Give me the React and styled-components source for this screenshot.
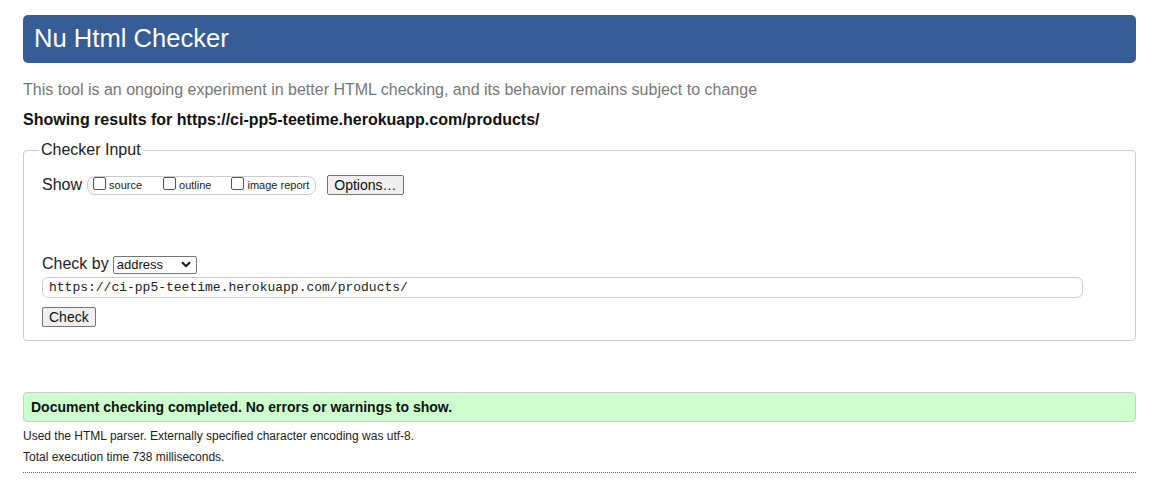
import React from 'react';
import styled, { createGlobalStyle } from 'styled-components';

const GlobalStyle = createGlobalStyle`
  html, body {
    margin: 0;
    padding: 0;
    background: #fff;
  }
  body {
    font-family: "Liberation Sans", Arial, sans-serif;
    color: #111;
  }
`

const Page = styled.div`
  padding: 15px 28px 0 23px;
`

const Header = styled.h1`
  margin: 0;
  height: 48px;
  padding-left: 11px;
  background: #365d95;
  border-radius: 5px;
  color: #fff;
  font-size: 25.6px;
  font-weight: 400;
  line-height: 47px;
`

const Intro = styled.p`
  margin: 18px 0 0;
  color: #777;
  font-size: 16px;
  line-height: 18px;
`

const Results = styled.p`
  margin: 12px 0 0;
  font-size: 16px;
  font-weight: 700;
  line-height: 18px;
  color: #111;
`

const Fieldset = styled.fieldset`
  margin: 12px 0 0;
  padding: 0 18px 13px;
  border: 1px solid #ccc;
  border-radius: 4px;
  min-width: 0;
`

const Legend = styled.legend`
  margin-left: -3px;
  padding: 0 2px;
  font-size: 16px;
  line-height: 18px;
  color: #222;
`

const Row = styled.div`
  display: flex;
  align-items: center;
  margin-top: ${p => p.$top || 0}px;
`

const Label = styled.span`
  font-size: 16px;
  line-height: 20px;
  color: #222;
  margin-right: 4px;
`

const Group = styled.div`
  display: flex;
  align-items: center;
  height: 17px;
  padding: 0 6px 0 5px;
  border: 1px solid #ccc;
  border-radius: 8px;
  margin-left: 1px;
`

const Option = styled.label`
  display: flex;
  align-items: center;
  font-size: 11px;
  color: #222;
  margin-right: ${p => p.$gap || 0}px;
`

const Box = styled.span`
  display: inline-block;
  width: 11px;
  height: 11px;
  border: 1px solid #555;
  border-radius: 2px;
  margin-right: 3px;
  margin-top: -4px;
  background: #fff;
`

const Button = styled.button`
  font-family: "Liberation Sans", Arial, sans-serif;
  font-size: 14px;
  line-height: 16px;
  color: #111;
  background: #efefef;
  border: 1px solid #767676;
  border-radius: 2px;
  padding: 1px 6px;
  margin-left: ${p => p.$left || 0}px;
  height: ${p => p.$h || 20}px;
`

const SelectWrap = styled.div`
  position: relative;
  width: 84px;
  height: 18px;
`

const Select = styled.select`
  appearance: none;
  width: 84px;
  height: 18px;
  margin: 0;
  padding: 0 0 0 3px;
  border: 1px solid #767676;
  border-radius: 2px;
  background: #fff;
  font-family: "Liberation Sans", Arial, sans-serif;
  font-size: 13px;
  color: #111;
`

const Chevron = styled.svg`
  position: absolute;
  right: 6px;
  top: 6px;
  pointer-events: none;
`

const UrlInput = styled.div`
  margin-top: 3px;
  width: 1041px;
  height: 21px;
  box-sizing: border-box;
  border: 1px solid #ccc;
  border-radius: 6px;
  padding-left: 6px;
  font-family: "Liberation Mono", "Courier New", monospace;
  font-size: 13px;
  line-height: 19px;
  color: #222;
`

const Success = styled.div`
  margin-top: 51px;
  height: 30px;
  box-sizing: border-box;
  padding-left: 7px;
  background: #ccffcc;
  border: 1px solid #ccc;
  border-radius: 4px;
  font-size: 14px;
  font-weight: 700;
  line-height: 28px;
  color: #111;
`

const Note = styled.p`
  margin: ${p => p.$top || 0}px 0 0;
  font-size: 12px;
  line-height: 16px;
  color: #222;
`

const Rule = styled.hr`
  margin: 7px 0 0;
  border: 0;
  border-top: 1px dotted #666;
`

const App = () => (
  <Page>
    <GlobalStyle />
    <Header>Nu Html Checker</Header>
    <Intro>This tool is an ongoing experiment in better HTML checking, and its behavior remains subject to change</Intro>
    <Results>Showing results for https://ci-pp5-teetime.herokuapp.com/products/</Results>
    <Fieldset>
      <Legend>Checker Input</Legend>
      <Row $top={16}>
        <Label>Show</Label>
        <Group>
          <Option $gap={21}><Box />source</Option>
          <Option $gap={20}><Box />outline</Option>
          <Option><Box />image report</Option>
        </Group>
        <Button $left={11}>Options…</Button>
      </Row>
      <Row $top={59}>
        <Label>Check by</Label>
        <SelectWrap>
          <Select defaultValue="address">
            <option value="address">address</option>
          </Select>
          <Chevron width="10" height="7" viewBox="0 0 10 7">
            <path d="M1 1.2 L5 5.2 L9 1.2" fill="none" stroke="#111" strokeWidth="2" />
          </Chevron>
        </SelectWrap>
      </Row>
      <UrlInput>https://ci-pp5-teetime.herokuapp.com/products/</UrlInput>
      <Row $top={9}>
        <Button>Check</Button>
      </Row>
    </Fieldset>
    <Success>Document checking completed. No errors or warnings to show.</Success>
    <Note $top={6}>Used the HTML parser. Externally specified character encoding was utf-8.</Note>
    <Note $top={5}>Total execution time 738 milliseconds.</Note>
    <Rule />
  </Page>
)

export default App
